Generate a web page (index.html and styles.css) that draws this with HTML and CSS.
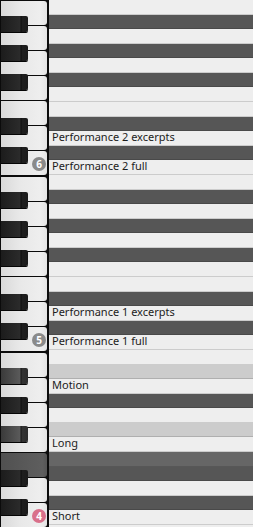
FILE: index.html
```html
<!DOCTYPE html>
<html>
<head>
<meta charset="utf-8">
<link rel="stylesheet" href="styles.css">
</head>
<body>
<div class="roll">
  <div class="keyboard">
    <div class="octave">
      <div class="wk"></div><div class="wk"></div><div class="wk"></div><div class="wk"></div><div class="wk"></div><div class="wk"></div><div class="wk"></div>
      <div class="bk b1"></div><div class="bk b3"></div><div class="bk b5"></div><div class="bk b8"></div><div class="bk b10"></div>
      <div class="badge">6</div>
    </div>
    <div class="octave">
      <div class="wk"></div><div class="wk"></div><div class="wk"></div><div class="wk"></div><div class="wk"></div><div class="wk"></div><div class="wk"></div>
      <div class="bk b1"></div><div class="bk b3"></div><div class="bk b5"></div><div class="bk b8"></div><div class="bk b10"></div>
      <div class="badge">5</div>
    </div>
    <div class="octave">
      <div class="wk"></div><div class="wk"></div><div class="wk"></div><div class="wk"></div><div class="wk on"></div><div class="wk"></div><div class="wk"></div>
      <div class="bk b1 on"></div><div class="bk b3"></div><div class="bk b5 on"></div><div class="bk b8"></div><div class="bk b10"></div>
      <div class="badge pink">4</div>
    </div>
    <div class="octave">
      <div class="wk"></div>
    </div>
  </div>
  <div class="lanes">
    <div class="loct">
      <div class="row"></div><div class="row d"></div><div class="row"></div><div class="row d"></div><div class="row"></div><div class="row d"></div>
      <div class="row"></div><div class="row"></div><div class="row d"></div><div class="row">Performance 2 excerpts</div><div class="row d"></div><div class="row">Performance 2 full</div>
    </div>
    <div class="loct">
      <div class="row"></div><div class="row d"></div><div class="row"></div><div class="row d"></div><div class="row"></div><div class="row d"></div>
      <div class="row"></div><div class="row"></div><div class="row d"></div><div class="row">Performance 1 excerpts</div><div class="row d"></div><div class="row">Performance 1 full</div>
    </div>
    <div class="loct">
      <div class="row"></div><div class="row hl"></div><div class="row">Motion</div><div class="row d"></div><div class="row"></div><div class="row hl"></div>
      <div class="row">Long</div><div class="row hd"></div><div class="row d"></div><div class="row"></div><div class="row d"></div><div class="row">Short</div>
    </div>
    <div class="loct">
      <div class="row"></div><div class="row d"></div>
    </div>
  </div>
</div>
</body>
</html>
```

FILE: styles.css
```css
:root {
  --r: calc(175px / 12);
}
* {
  box-sizing: border-box;
}
html, body {
  margin: 0;
  height: 100%;
  overflow: hidden;
  background: #eeeeee;
}
body {
  font-family: "Noto Sans", "DejaVu Sans", sans-serif;
}
.roll {
  display: flex;
  height: 527px;
  overflow: hidden;
}
.keyboard {
  flex: 0 0 49px;
  background: #0b0b0b;
}
.octave {
  position: relative;
  height: 175px;
  padding: 0 2px 0 1px;
}
.wk {
  height: 24px;
  margin-top: 1px;
  border-radius: 0 3px 3px 0;
  background: linear-gradient(to right, #d9d9d9 0%, #e8e8e8 40%, #eeeeee 85%, #e4e4e4 100%);
}
.wk.on {
  background: linear-gradient(to right, #505050 0%, #5a5a5a 60%, #5e5e5e 90%, #555 100%);
}
.bk {
  position: absolute;
  left: 1px;
  width: 27px;
  height: calc(var(--r) + 1.5px);
  border-radius: 0 2px 2px 0;
  background: linear-gradient(to right, #1c1c1c 0%, #2b2b2b 70%, #101010 74%, #1e1e1e 80%, #1a1a1a 100%);
  box-shadow: 0 1px 0 #050505;
}
.bk.on {
  background: linear-gradient(to right, #3a3a3a 0%, #5a5a5a 70%, #1c1c1c 74%, #333 80%, #2c2c2c 100%);
}
.b1 { top: var(--r); }
.b3 { top: calc(var(--r) * 3); }
.b5 { top: calc(var(--r) * 5); }
.b8 { top: calc(var(--r) * 8); }
.b10 { top: calc(var(--r) * 10); }
.badge {
  position: absolute;
  left: 32px;
  top: 155.5px;
  width: 14px;
  height: 14px;
  border-radius: 50%;
  background: #8a8a8a;
  color: #fff;
  font-size: 10px;
  font-weight: bold;
  line-height: 14px;
  text-align: center;
}
.badge.pink {
  background: #d9708a;
}
.lanes {
  flex: 1;
  min-width: 0;
}
.loct {
  display: grid;
  grid-template-rows: repeat(12, var(--r));
  height: 175px;
}
.row {
  background: #eeeeee;
  border-bottom: 1px solid rgba(0, 0, 0, 0.14);
  font-size: 11px;
  line-height: 12px;
  padding-left: 3px;
  color: #1c1c1c;
  white-space: nowrap;
  min-height: 0;
}
.row.d { background: #565656; }
.row.hl { background: #cccccc; }
.row.hd { background: #666666; }
```
